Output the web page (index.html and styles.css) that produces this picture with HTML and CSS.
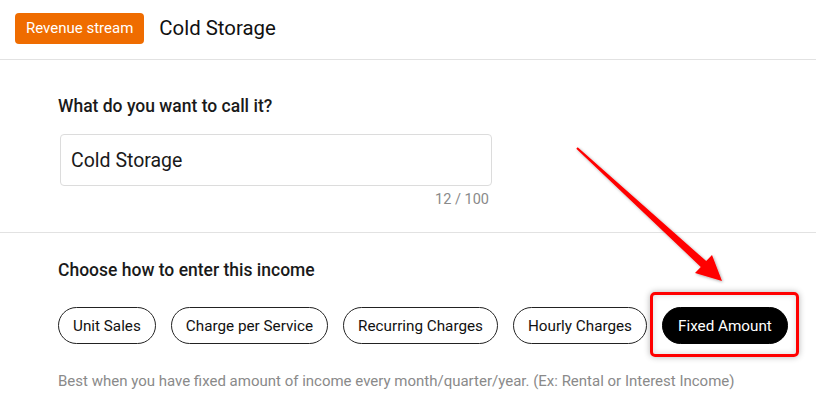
FILE: index.html
```html
<!DOCTYPE html>
<html>
<head>
<link rel="stylesheet" href="styles.css">
</head>
<body>

<header class="topbar">
  <span class="badge">Revenue stream</span>
  <h1 class="page-title">Cold Storage</h1>
</header>

<section class="block">
  <label class="field-label" for="name">What do you want to call it?</label>
  <div class="field">
    <input type="text" id="name" value="Cold Storage" maxlength="100">
    <div class="counter">12 / 100</div>
  </div>
</section>

<section class="block">
  <h2 class="field-label">Choose how to enter this income</h2>
  <div class="chips">
    <button class="chip">Unit Sales</button>
    <button class="chip">Charge per Service</button>
    <button class="chip">Recurring Charges</button>
    <button class="chip">Hourly Charges</button>
    <div class="marked">
      <button class="chip active">Fixed Amount</button>
      <span class="highlight"></span>
    </div>
  </div>
  <p class="hint">Best when you have fixed amount of income every month/quarter/year. (Ex: Rental or Interest Income)</p>
</section>

<!-- annotation arrow -->
<svg class="arrow" width="816" height="406" viewBox="0 0 816 406">
  <defs>
    <filter id="shadow" x="-20%" y="-20%" width="140%" height="140%">
      <feDropShadow dx="1" dy="1" stdDeviation="1.5" flood-color="#000" flood-opacity="0.35"/>
    </filter>
  </defs>
  <polygon filter="url(#shadow)" fill="#ff0000"
    points="577.7,147.3 706.2,261.1 712,255 722,281 695,273 700.8,266.9 576.3,148.7"/>
</svg>

</body>
</html>
```

FILE: styles.css
```css
body {
  font-family: Roboto, "Liberation Sans", Arial, sans-serif;
  background-color: #fff;
  color: #1a1a1a;
  margin: 0;
  padding: 0;
  position: relative;
  width: 816px;
  height: 406px;
  overflow: hidden;
}

.topbar {
  display: flex;
  align-items: center;
  gap: 15px;
  height: 59px;
  padding: 0 15px;
  box-sizing: content-box;
  border-bottom: 1px solid #e2e2e2;
}

.badge {
  display: inline-flex;
  align-items: center;
  height: 31px;
  padding: 0 11px;
  margin-top: -3px;
  background-color: #ef6c00;
  color: #fff;
  font-size: 15px;
  border-radius: 4px;
}

.page-title {
  margin: -3px 0 0;
  font-size: 20.4px;
  font-weight: 400;
  color: #111;
}

.block {
  padding: 36px 0 23px 58px;
  border-bottom: 1px solid #e2e2e2;
}

.block + .block {
  padding-top: 27px;
  border-bottom: none;
}

.field-label {
  display: block;
  margin: 0;
  font-size: 17.5px;
  line-height: 20px;
  font-weight: 500;
  color: #1a1a1a;
}

.field {
  width: 432px;
  margin: 18px 0 0 2px;
}

.field input {
  width: 100%;
  height: 52px;
  box-sizing: border-box;
  padding: 0 10px;
  border: 1px solid #dcdcdc;
  border-radius: 4px;
  font-family: inherit;
  font-size: 19.5px;
  color: #1a1a1a;
  outline: none;
}

.counter {
  margin-top: 5px;
  padding-right: 3px;
  text-align: right;
  font-size: 14.5px;
  line-height: 18px;
  color: #8a8a8a;
}

.chips {
  display: flex;
  gap: 15px;
  margin-top: 27px;
}

.chip {
  height: 37px;
  padding: 0 14px;
  border: 1px solid #222;
  border-radius: 19px;
  background-color: #fff;
  color: #111;
  font-family: inherit;
  font-size: 15.25px;
  cursor: pointer;
}

.chip.active {
  background-color: #000;
  border-color: #000;
  color: #fff;
  padding: 0 15px;
}

.marked {
  position: relative;
}

.highlight {
  position: absolute;
  top: -15px;
  left: -12px;
  right: -11px;
  bottom: -13px;
  border: 3px solid #ff0000;
  border-radius: 5px;
  box-shadow: 0 0 6px rgba(0, 0, 0, 0.3), inset 0 0 6px rgba(0, 0, 0, 0.15);
  pointer-events: none;
}

.hint {
  margin: 28px 0 0;
  font-size: 15px;
  line-height: 18px;
  color: #8a8a8a;
}

.arrow {
  position: absolute;
  top: 0;
  left: 0;
  pointer-events: none;
}
```
